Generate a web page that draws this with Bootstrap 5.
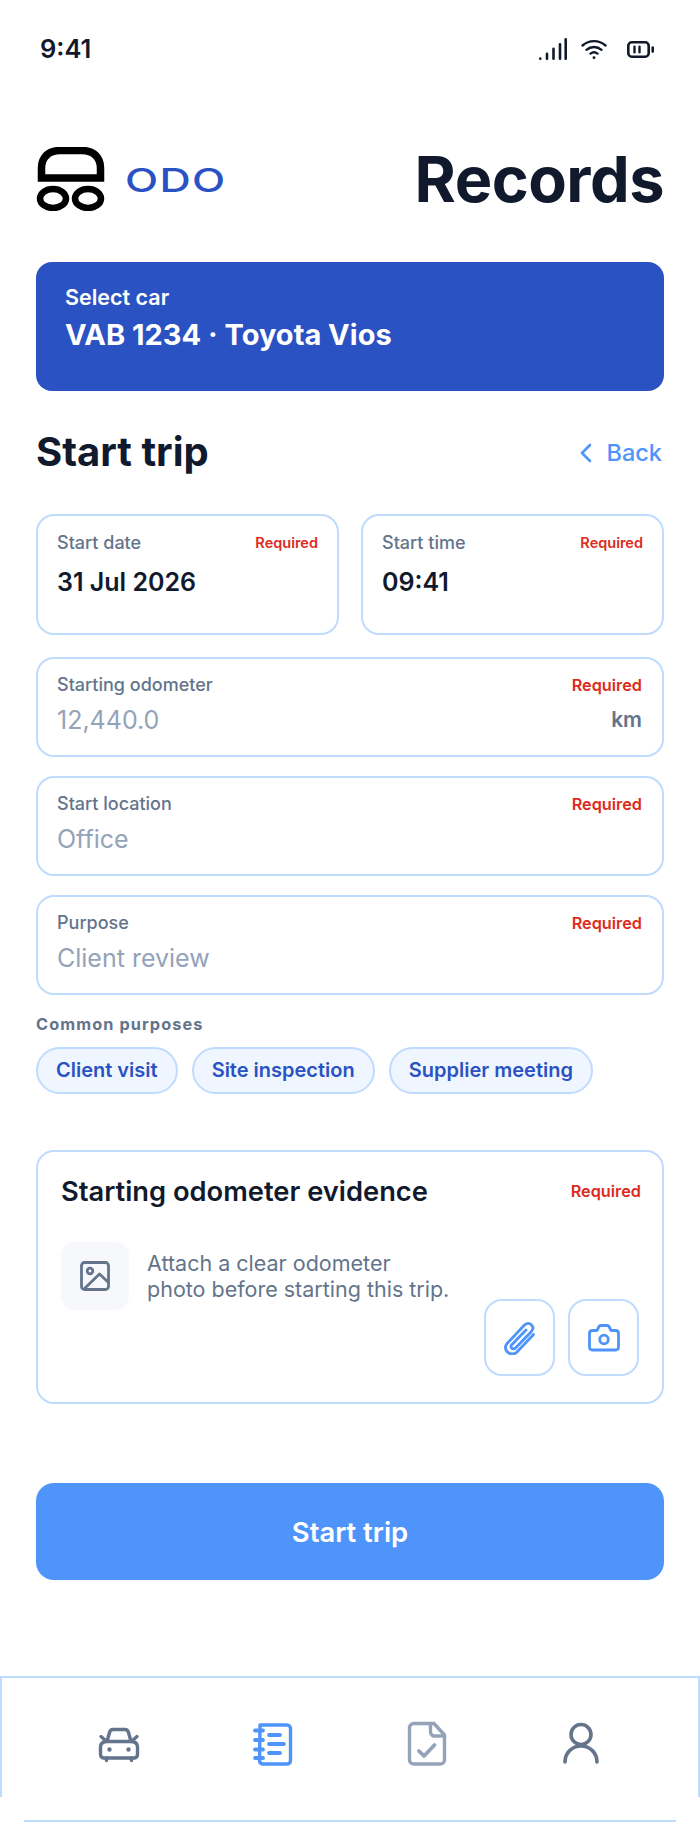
<!DOCTYPE html>
<html lang="en">
<head>
    <meta charset="UTF-8">
    <meta name="viewport" content="width=device-width, initial-scale=1.0">
    <title>Records</title>
    <link href="https://cdn.jsdelivr.net/npm/bootstrap@5.3.0/dist/css/bootstrap.min.css" rel="stylesheet">
    <style>
        body {
            font-family: "Inter", "Liberation Sans", sans-serif;
            color: #111a2c;
            background: #fff;
            width: 700px;
            height: 1824px;
            overflow: hidden;
        }
        .status-row { padding: 34px 46px 0 40px; height: 64px; }
        .status-time { font-size: 25.5px; font-weight: 600; line-height: 30px; }
        .page-main { padding: 0 36px; }
        .top-head { margin-top: 83px; height: 64px; }
        .logo-word {
            color: #2b52c3;
            font-size: 32.5px;
            font-weight: 500;
            line-height: 1;
            margin: 5px 0 0 20px;
            letter-spacing: 1px;
            transform: scaleX(1.33);
            transform-origin: left center;
        }
        .page-title { font-size: 63px; font-weight: 700; line-height: 64px; margin: 0; letter-spacing: -0.5px; }
        .car-box {
            margin-top: 51px;
            height: 129px;
            background: #2b52c3;
            border: 0;
            border-radius: 16px;
            padding: 22px 29px;
            color: #fff;
        }
        .car-label { font-size: 21.5px; font-weight: 600; line-height: 27px; }
        .car-value { font-size: 29px; font-weight: 700; line-height: 36px; margin-top: 6px; }
        .section-head { margin-top: 38px; height: 46px; }
        .section-title { font-size: 40px; font-weight: 700; line-height: 46px; margin: 0; }
        .back-link { color: #4f94fb; font-size: 23.5px; font-weight: 500; text-decoration: none; gap: 15px; margin: 2px 2px 0 0; }
        .field-box {
            border: 2px solid #bfdbfe;
            border-radius: 18px;
            background: #fff;
            padding: 14px 20px 0 19px;
        }
        .field-pair { margin-top: 39px; gap: 22px; }
        .field-pair .field-box { height: 121px; flex: 1 1 0; padding-top: 15px; padding-right: 19px; }
        .field-pair .req-tag { font-size: 14.5px; }
        .field-stack { margin-top: 22px; gap: 19px; }
        .field-stack .field-box { height: 100px; }
        .field-label { font-size: 18px; font-weight: 500; color: #64748b; line-height: 24px; }
        .req-tag { font-size: 16.3px; font-weight: 600; color: #dc2b20; line-height: 24px; }
        .field-val { font-size: 25px; font-weight: 600; color: #111a2c; line-height: 30px; margin-top: 12px; }
        .field-hint { font-size: 25px; font-weight: 400; color: #94a3b8; line-height: 30px; margin-top: 8px; }
        .field-unit { font-size: 21px; font-weight: 600; color: #64748b; line-height: 30px; margin-top: 8px; }
        .hint-title { font-size: 16.3px; font-weight: 700; color: #64748b; letter-spacing: 1.1px; line-height: 20px; margin-top: 19px; }
        .chip-row { gap: 14px; margin-top: 13px; }
        .chip-btn {
            height: 47px;
            padding: 0 18px;
            border: 2px solid #bfdbfe;
            border-radius: 24px;
            background: #eff6ff;
            color: #2b52c3;
            font-size: 20px;
            font-weight: 600;
            line-height: 43px;
        }
        .evidence-box {
            margin-top: 56px;
            height: 254px;
            border: 2px solid #bfdbfe;
            border-radius: 18px;
            padding: 22px 21px 25px 23px;
        }
        .evidence-title { font-size: 27.3px; font-weight: 600; line-height: 36px; margin: 0; }
        .evidence-head .req-tag { margin-bottom: 3px; }
        .evidence-body { margin-top: 32px; }
        .thumb-box { width: 68px; height: 68px; background: #f6f8fb; border-radius: 14px; flex: none; }
        .evidence-text { font-size: 21.5px; line-height: 26px; color: #64748b; margin: 8px 0 0 18px; white-space: nowrap; }
        .tool-row { gap: 13px; margin: 0 2px 0 auto; padding-top: 57px; }
        .tool-btn {
            width: 71px;
            height: 77px;
            padding: 0;
            border: 2px solid #bfdbfe;
            border-radius: 18px;
            background: #fff;
        }
        .go-btn {
            margin-top: 79px;
            height: 97px;
            width: 100%;
            border: 0;
            border-radius: 18px;
            padding-top: 8px;
            background: #4f94fb;
            color: #fff;
            font-size: 27.4px;
            font-weight: 600;
        }
        .tab-bar {
            margin-top: 96px;
            height: 121px;
            border: 2px solid #bfdbfe;
            border-bottom: 0;
            padding: 0 40px;
        }
        .tab-item { flex: 1 1 0; padding-top: 42px; }
        .tab-foot { height: 25px; margin: 0 24px; border-bottom: 2px solid #bfdbfe; }
    </style>
</head>
<body>
    <div class="status-row d-flex justify-content-between align-items-center">
        <span class="status-time">9:41</span>
        <span class="d-flex align-items-center">
            <svg width="28" height="22" viewBox="0 0 28 22" fill="none" stroke="#111a2c" stroke-width="2.6" stroke-linecap="round">
                <path d="M1.3 20.7v-.1M8 20.7v-5M14.5 20.7v-10M21 20.7v-14.5M26.7 20.7V1.3"/>
            </svg>
            <svg style="margin-left:14px" width="26" height="20" viewBox="0 0 26 20" fill="none" stroke="#111a2c" stroke-width="2.4" stroke-linecap="round">
                <path d="M1.5 6.5C8 .6 18 .6 24.5 6.5M5.5 10.8c4.3-3.8 10.7-3.8 15 0M9.5 14.6c2.1-1.6 4.9-1.6 7 0"/>
                <path d="M13 18.6v.1" stroke-width="2.8"/>
            </svg>
            <svg style="margin-left:20px" width="27" height="17" viewBox="0 0 27 17" fill="none" stroke="#111a2c" stroke-linecap="round">
                <rect x="1.3" y="1.3" width="20.4" height="14.4" rx="3.5" stroke-width="2.6"/>
                <path d="M7.5 5.8v5.4M12.5 5.8v5.4" stroke-width="2.4"/>
                <path d="M25.7 6.5v4" stroke-width="2.6"/>
            </svg>
        </span>
    </div>

    <div class="page-main">
        <div class="top-head d-flex justify-content-between align-items-center">
            <div class="d-flex align-items-center">
                <svg width="69" height="64" viewBox="0 0 69 64" fill="none" stroke="#000">
                    <path d="M5.500 31V21C5.500 10 13 3.500 24 3.500H46C57 3.500 64.500 10 64.500 21V31Z" stroke-width="7.500"/>
                    <ellipse cx="17" cy="51.500" rx="13" ry="9.500" stroke-width="6.500"/>
                    <ellipse cx="52" cy="51.500" rx="13" ry="9.500" stroke-width="6.500"/>
                </svg>
                <span class="logo-word">ODO</span>
            </div>
            <h1 class="page-title">Records</h1>
        </div>

        <div class="car-box card">
            <div class="car-label">Select car</div>
            <div class="car-value">VAB 1234 · Toyota Vios</div>
        </div>

        <div class="section-head d-flex justify-content-between align-items-center">
            <h2 class="section-title">Start trip</h2>
            <a class="back-link d-flex align-items-center" href="#">
                <svg width="12" height="20" viewBox="0 0 12 20" fill="none" stroke="#4f94fb" stroke-width="2.6" stroke-linecap="round" stroke-linejoin="round"><path d="M10 2 2 10l8 8"/></svg>
                Back
            </a>
        </div>

        <div class="field-pair d-flex">
            <div class="field-box">
                <div class="d-flex justify-content-between">
                    <span class="field-label">Start date</span>
                    <span class="req-tag">Required</span>
                </div>
                <div class="field-val">31 Jul 2026</div>
            </div>
            <div class="field-box">
                <div class="d-flex justify-content-between">
                    <span class="field-label">Start time</span>
                    <span class="req-tag">Required</span>
                </div>
                <div class="field-val">09:41</div>
            </div>
        </div>

        <div class="field-stack d-flex flex-column">
            <div class="field-box">
                <div class="d-flex justify-content-between">
                    <span class="field-label">Starting odometer</span>
                    <span class="req-tag">Required</span>
                </div>
                <div class="d-flex justify-content-between">
                    <span class="field-hint">12,440.0</span>
                    <span class="field-unit">km</span>
                </div>
            </div>
            <div class="field-box">
                <div class="d-flex justify-content-between">
                    <span class="field-label">Start location</span>
                    <span class="req-tag">Required</span>
                </div>
                <div class="field-hint">Office</div>
            </div>
            <div class="field-box">
                <div class="d-flex justify-content-between">
                    <span class="field-label">Purpose</span>
                    <span class="req-tag">Required</span>
                </div>
                <div class="field-hint">Client review</div>
            </div>
        </div>

        <div class="hint-title">Common purposes</div>
        <div class="chip-row d-flex">
            <button class="chip-btn btn" type="button">Client visit</button>
            <button class="chip-btn btn" type="button">Site inspection</button>
            <button class="chip-btn btn" type="button">Supplier meeting</button>
        </div>

        <div class="evidence-box">
            <div class="evidence-head d-flex justify-content-between align-items-center">
                <h3 class="evidence-title">Starting odometer evidence</h3>
                <span class="req-tag">Required</span>
            </div>
            <div class="evidence-body d-flex">
                <div class="thumb-box d-flex align-items-center justify-content-center">
                    <svg width="30" height="30" viewBox="0 0 30 30" fill="none" stroke="#64748b" stroke-width="2.800" stroke-linecap="round" stroke-linejoin="round">
                        <rect x="1.500" y="1.500" width="27" height="27" rx="3"/>
                        <circle cx="10" cy="10" r="2.800"/>
                        <path d="M5 27 19.500 13 28 21"/>
                    </svg>
                </div>
                <div class="evidence-text">Attach a clear odometer<br>photo before starting this trip.</div>
                <div class="tool-row d-flex">
                    <button class="tool-btn btn d-flex align-items-center justify-content-center" type="button" aria-label="Attach">
                        <svg width="32" height="34" viewBox="0 0 32 34" fill="none" stroke="#4f94fb" stroke-width="2.800" stroke-linecap="round" stroke-linejoin="round">
                            <path d="M29.500 13.500 13 31c-3 3-7.500 2.500-10-.5-2.200-2.700-1.800-6 .5-8.500L20 4.500c2.500-2.600 5.500-2.600 7.500-.6 2 2 1.700 4.800-.5 7.100L11.500 27c-1.300 1.300-3 1.100-3.900.1-.9-1-.8-2.400.4-3.700L22 9"/>
                        </svg>
                    </button>
                    <button class="tool-btn btn d-flex align-items-center justify-content-center" type="button" aria-label="Camera">
                        <svg width="32" height="28" viewBox="0 0 32 28" fill="none" stroke="#4f94fb" stroke-width="2.800" stroke-linecap="round" stroke-linejoin="round">
                            <path d="M4.500 6.500H9L11 2.500c.4-.7.900-1 1.600-1h6.800c.7 0 1.200.3 1.600 1L23 6.500h4.500c1.700 0 3 1.300 3 3V23c0 1.700-1.300 3-3 3h-23c-1.700 0-3-1.300-3-3V9.500c0-1.700 1.300-3 3-3Z"/>
                            <circle cx="16" cy="15.500" r="4.300"/>
                        </svg>
                    </button>
                </div>
            </div>
        </div>

        <button class="go-btn btn" type="button">Start trip</button>
    </div>

    <div class="tab-bar d-flex">
        <div class="tab-item d-flex justify-content-center">
            <svg width="48" height="48" viewBox="0 0 48 48" fill="none" stroke="#64748b" stroke-width="3.400" stroke-linecap="round" stroke-linejoin="round">
                <path d="M11 21.500h26M12 21.500l2.500-9c.5-1.800 1.800-3 3.500-3h12c1.700 0 3 1.200 3.500 3l2.500 9"/>
                <path d="M11 21.500c-3.500.5-5.500 2.500-5.500 5.500v7.500c0 2 1.500 3.500 3.500 3.500h30c2 0 3.500-1.500 3.500-3.500V27c0-3-2-5-5.500-5.500"/>
                <path d="M6 16.500 10 20M42 16.500 38 20M11.500 38v2.500M36.500 38v2.500"/>
                <path d="M14.500 29.500v.1M33.500 29.500v.1" stroke-width="4.400"/>
            </svg>
        </div>
        <div class="tab-item d-flex justify-content-center">
            <svg width="48" height="48" viewBox="0 0 48 48" fill="none" stroke="#4f94fb" stroke-width="3.400" stroke-linecap="round" stroke-linejoin="round">
                <path d="M11 5h27c2 0 3.500 1.500 3.500 3.500v32c0 2-1.500 3.500-3.500 3.500H14c-2 0-3.500-1.500-3.500-3.500Z"/>
                <path d="M6 10.500h8M6 20h8M6 29.500h8M6 38h8" stroke-width="3.800"/>
                <path d="M20 15h11M20 24h15M20 33h11" stroke-width="3.800"/>
            </svg>
        </div>
        <div class="tab-item d-flex justify-content-center">
            <svg width="48" height="48" viewBox="0 0 48 48" fill="none" stroke="#94a3b8" stroke-width="3.400" stroke-linecap="round" stroke-linejoin="round">
                <path d="M31 3.500H11c-2.500 0-4.500 2-4.500 4.500v32c0 2.500 2 4 4.500 4h26c2.500 0 4.500-1.500 4.500-4V15Z"/>
                <path d="M27.500 4v8c0 2.500 2 4 4 4h9.500"/>
                <path d="M16 31l5 5 10.500-11" stroke-width="3.800"/>
            </svg>
        </div>
        <div class="tab-item d-flex justify-content-center">
            <svg width="48" height="48" viewBox="0 0 48 48" fill="none" stroke="#64748b" stroke-width="3.600" stroke-linecap="round" stroke-linejoin="round">
                <circle cx="24" cy="14.500" r="10"/>
                <path d="M8 42c0-9 7-16 16-16s16 7 16 16"/>
            </svg>
        </div>
    </div>
    <div class="tab-foot"></div>

    <script src="https://cdn.jsdelivr.net/npm/bootstrap@5.3.0/dist/js/bootstrap.bundle.min.js"></script>
</body>
</html>
